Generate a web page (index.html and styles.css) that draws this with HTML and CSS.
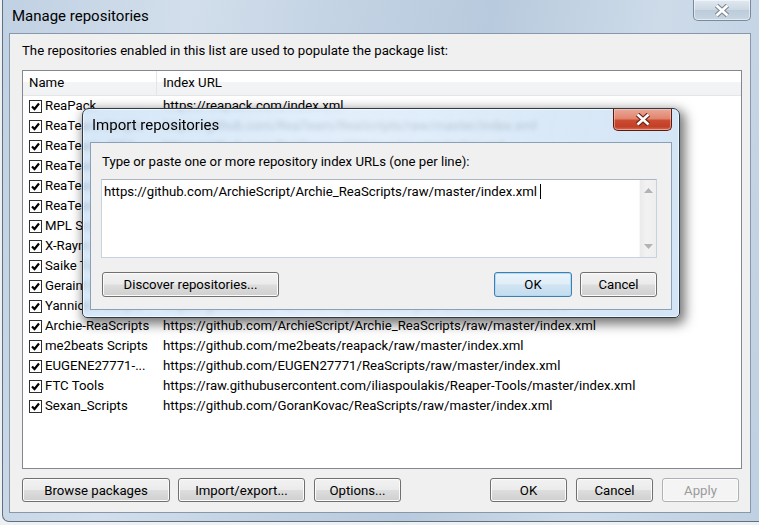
FILE: index.html
```html
<!DOCTYPE html>
<html lang="en">
  <head>
    <meta charset="UTF-8" />
    <title>Manage repositories</title>
    <link rel="stylesheet" href="styles.css">
  </head>
  <body>
    <div class="window">
      <div class="titlebar">
        <span class="title">Manage repositories</span>
        <button class="close-btn">
          <svg width="18" height="13" viewBox="0 0 18 13"><path d="M3.5 1.5 L14.5 11.5 M14.5 1.5 L3.5 11.5" class="x-outline" /><path d="M3.5 1.5 L14.5 11.5 M14.5 1.5 L3.5 11.5" class="x-fill" /></svg>
        </button>
      </div>
      <div class="client">
        <p class="intro">The repositories enabled in this list are used to populate the package list:</p>
        <div class="list">
          <div class="list-head">
            <div class="col-name">Name</div>
            <div class="col-url">Index URL</div>
          </div>
          <div class="row"><div class="name"><span class="check"></span><span>ReaPack</span></div><div class="url">https://reapack.com/index.xml</div></div>
          <div class="row"><div class="name"><span class="check"></span><span>ReaTeam Scripts</span></div><div class="url">https://github.com/ReaTeam/ReaScripts/raw/master/index.xml</div></div>
          <div class="row"><div class="name"><span class="check"></span><span>ReaTeam JSFX</span></div><div class="url">https://github.com/ReaTeam/JSFX/raw/master/index.xml</div></div>
          <div class="row"><div class="name"><span class="check"></span><span>ReaTeam Themes</span></div><div class="url">https://github.com/ReaTeam/Themes/raw/master/index.xml</div></div>
          <div class="row"><div class="name"><span class="check"></span><span>ReaTeam LangPacks</span></div><div class="url">https://github.com/ReaTeam/LangPacks/raw/master/index.xml</div></div>
          <div class="row"><div class="name"><span class="check"></span><span>ReaTeam Extensions</span></div><div class="url">https://github.com/ReaTeam/Extensions/raw/master/index.xml</div></div>
          <div class="row"><div class="name"><span class="check"></span><span>MPL Scripts</span></div><div class="url">https://github.com/MichaelPilyavskiy/ReaScripts/raw/master/index.xml</div></div>
          <div class="row"><div class="name"><span class="check"></span><span>X-Raym Scripts</span></div><div class="url">https://github.com/X-Raym/REAPER-ReaScripts/raw/master/index.xml</div></div>
          <div class="row"><div class="name"><span class="check"></span><span>Saike Tools</span></div><div class="url">https://raw.githubusercontent.com/JoepVanlier/JSFX/master/index.xml</div></div>
          <div class="row"><div class="name"><span class="check"></span><span>Geraint's Scripts</span></div><div class="url">https://geraintluff.github.io/jsfx/index.xml</div></div>
          <div class="row"><div class="name"><span class="check"></span><span>Yannick's Scripts</span></div><div class="url">https://github.com/YannickReaper/ReaScripts/raw/master/index.xml</div></div>
          <div class="row"><div class="name"><span class="check"></span><span>Archie-ReaScripts</span></div><div class="url">https://github.com/ArchieScript/Archie_ReaScripts/raw/master/index.xml</div></div>
          <div class="row"><div class="name"><span class="check"></span><span>me2beats Scripts</span></div><div class="url">https://github.com/me2beats/reapack/raw/master/index.xml</div></div>
          <div class="row"><div class="name"><span class="check"></span><span>EUGENE27771-...</span></div><div class="url">https://github.com/EUGEN27771/ReaScripts/raw/master/index.xml</div></div>
          <div class="row"><div class="name"><span class="check"></span><span>FTC Tools</span></div><div class="url">https://raw.githubusercontent.com/iliaspoulakis/Reaper-Tools/master/index.xml</div></div>
          <div class="row"><div class="name"><span class="check"></span><span>Sexan_Scripts</span></div><div class="url">https://github.com/GoranKovac/ReaScripts/raw/master/index.xml</div></div>
        </div>
        <div class="actions">
          <button class="btn w-browse">Browse packages</button>
          <button class="btn w-import">Import/export...</button>
          <button class="btn w-options">Options...</button>
          <span class="spacer"></span>
          <button class="btn w-std">OK</button>
          <button class="btn w-std">Cancel</button>
          <button class="btn w-std disabled">Apply</button>
        </div>
      </div>
    </div>

    <div class="dialog">
      <div class="titlebar dialog-bar">
        <span class="title">Import repositories</span>
        <button class="close-btn close-red">
          <svg width="18" height="13" viewBox="0 0 18 13"><path d="M3.5 1.5 L14.5 11.5 M14.5 1.5 L3.5 11.5" class="x-outline dark" /><path d="M3.5 1.5 L14.5 11.5 M14.5 1.5 L3.5 11.5" class="x-fill" /></svg>
        </button>
      </div>
      <div class="dialog-client">
        <p class="prompt">Type or paste one or more repository index URLs (one per line):</p>
        <div class="textbox">
          <div class="text">https://github.com/ArchieScript/Archie_ReaScripts/raw/master/index.xml <span class="caret"></span></div>
          <div class="scrollbar">
            <svg width="9" height="5" viewBox="0 0 9 5"><path d="M0 5 L4.5 0 L9 5 Z" /></svg>
            <svg width="9" height="5" viewBox="0 0 9 5"><path d="M0 0 L4.5 5 L9 0 Z" /></svg>
          </div>
        </div>
        <div class="dialog-actions">
          <button class="btn w-discover">Discover repositories...</button>
          <span class="spacer"></span>
          <button class="btn default w-ok">OK</button>
          <button class="btn w-std">Cancel</button>
        </div>
      </div>
    </div>
  </body>
</html>
```

FILE: styles.css
```css
* {
  box-sizing: border-box;
}

body {
  margin: 0;
  width: 759px;
  height: 525px;
  overflow: hidden;
  position: relative;
  background: #eef1f4;
  font-family: Roboto, "Liberation Sans", sans-serif;
  font-size: 13.2px;
  color: #000;
}

p {
  margin: 0;
}

/* main window */

.window {
  display: flex;
  flex-direction: column;
  height: 522px;
  margin-left: 2px;
  padding: 0 8px 8px 6px;
  border-left: 1px solid #62707e;
  border-bottom: 1px solid #62707e;
  border-bottom-left-radius: 7px;
  background: linear-gradient(100deg, #c0d1e3 0%, #d2deeb 22%, #c3d3e4 40%, #b8cadd 58%, #cddbe9 78%, #bfd0e2 100%);
}

.titlebar {
  display: flex;
  align-items: flex-start;
  height: 33px;
  flex-shrink: 0;
}

.title {
  margin: 8px 0 0 3px;
  font-size: 15px;
  line-height: 16px;
  color: #000;
}

.close-btn {
  margin-left: auto;
  width: 58px;
  height: 21px;
  padding: 0;
  display: flex;
  align-items: center;
  justify-content: center;
  border: 1px solid #7a8a9c;
  border-top: none;
  border-radius: 0 0 5px 5px;
  background: linear-gradient(#e1e9f1, #cbd7e3 50%, #bccbda 50%, #c8d5e2);
  box-shadow: inset 0 0 0 1px rgba(255, 255, 255, 0.5);
}

.x-outline {
  fill: none;
  stroke: #7d8792;
  stroke-width: 4.8;
}

.x-outline.dark {
  stroke: #6a1c10;
}

.x-fill {
  fill: none;
  stroke: #fff;
  stroke-width: 2.6;
}

.client {
  height: 480px;
  padding: 9px 8px 10px 12px;
  border: 1px solid #8798ab;
  background: #f0f0f0;
  display: flex;
  flex-direction: column;
}

.intro {
  line-height: 16px;
  margin-bottom: 11px;
}

.list {
  height: 399px;
  border: 1px solid #828790;
  background: #fff;
  overflow: hidden;
}

.list-head {
  display: grid;
  grid-template-columns: 134px 1fr;
  height: 25px;
  border-bottom: 1px solid #e5e5e5;
  background: linear-gradient(#fff 0%, #fff 45%, #f3f4f6 46%, #f1f2f4 100%);
}

.list-head div {
  line-height: 24px;
  padding-left: 6px;
}

.col-name {
  border-right: 1px solid #e3e5e8;
}

.row {
  display: grid;
  grid-template-columns: 134px 1fr;
  height: 20px;
  line-height: 20px;
  white-space: nowrap;
}

.name {
  display: flex;
  align-items: center;
  gap: 3px;
  padding-left: 6px;
  overflow: hidden;
}

.url {
  padding-left: 6px;
  overflow: hidden;
}

.check {
  flex-shrink: 0;
  width: 13px;
  height: 13px;
  border: 1px solid #2e2e2e;
  background: #fff url("data:image/svg+xml;utf8,<svg xmlns='http://www.w3.org/2000/svg' width='11' height='11'><path d='M2 5.5 L4.5 8 L9 2.5' fill='none' stroke='black' stroke-width='2.2'/></svg>") center / 11px 11px no-repeat;
}

.actions {
  display: flex;
  gap: 8px;
  margin-top: 9px;
  padding-right: 3px;
}

.spacer {
  flex: 1;
}

/* buttons */

.btn {
  height: 24px;
  padding: 0;
  font-family: inherit;
  font-size: 13.2px;
  color: #000;
  border: 1px solid #707070;
  border-radius: 3px;
  background: linear-gradient(#f2f2f2 0%, #ebebeb 48%, #dddddd 52%, #cfcfcf 100%);
  box-shadow: inset 0 0 0 1px #fbfbfb;
}

.btn.disabled {
  color: #9b9b9b;
  border-color: #adb2b5;
  background: #f4f4f4;
}

.btn.default {
  border-color: #3c7fb1;
  background: linear-gradient(#eaf4fb 0%, #e0eef8 48%, #d0e4f3 52%, #c4dcee 100%);
  box-shadow: inset 0 0 0 1px #b4daf3;
}

.w-browse { width: 148px; }
.w-import { width: 127px; }
.w-options { width: 87px; margin-left: 1px; }
.w-std { width: 77px; }
.w-ok { width: 78px; }
.w-discover { width: 177px; }

.actions .w-std + .w-std {
  margin-left: 1px;
}

/* import dialog */

.dialog {
  position: absolute;
  left: 82px;
  top: 108px;
  width: 598px;
  height: 210px;
  display: flex;
  flex-direction: column;
  padding: 0 7px 7px 7px;
  border: 1px solid #2f3a46;
  border-radius: 7px 7px 5px 5px;
  background: linear-gradient(100deg, rgba(205, 226, 246, 0.82), rgba(222, 236, 250, 0.86) 45%, rgba(200, 222, 243, 0.82));
  backdrop-filter: blur(2.5px);
  box-shadow: 3px 4px 12px 2px rgba(0, 0, 0, 0.55), inset 0 0 0 1px rgba(255, 255, 255, 0.6);
}

.dialog-bar .title {
  margin-left: 2px;
}

.dialog-bar .close-btn {
  width: 59px;
  height: 22px;
}

.close-red {
  border-color: #5a1a10;
  background: linear-gradient(#eaa898 0%, #e0866f 45%, #cb4a30 55%, #c24027 85%, #d8735a 100%);
  box-shadow: inset 0 0 0 1px rgba(255, 210, 200, 0.5);
}

.dialog-client {
  flex: 1;
  display: flex;
  flex-direction: column;
  padding: 11px 14px 12px 11px;
  border: 1px solid #8aa0b7;
  background: #f0f0f0;
}

.prompt {
  line-height: 16px;
  margin-bottom: 9px;
}

.textbox {
  display: flex;
  height: 79px;
  margin-left: -1px;
  border: 1px solid #c5d3e1;
  border-top-color: #abb6c2;
  background: #fff;
}

.text {
  flex: 1;
  padding: 4px 0 0 2px;
  line-height: 16px;
  white-space: nowrap;
}

.caret {
  display: inline-block;
  width: 1px;
  height: 15px;
  vertical-align: -3px;
  background: #000;
}

.scrollbar {
  width: 17px;
  display: flex;
  flex-direction: column;
  align-items: center;
  justify-content: space-between;
  padding: 8px 0 8px;
  background: linear-gradient(90deg, #eaeaea, #f2f2f2 40%, #eeeeee);
  border-left: 1px solid #f8f8f8;
}

.scrollbar path {
  fill: #b0b4b8;
}

.dialog-actions {
  display: flex;
  gap: 8px;
  margin-top: 14px;
}

.dialog-actions .btn {
  height: 25px;
}
```
